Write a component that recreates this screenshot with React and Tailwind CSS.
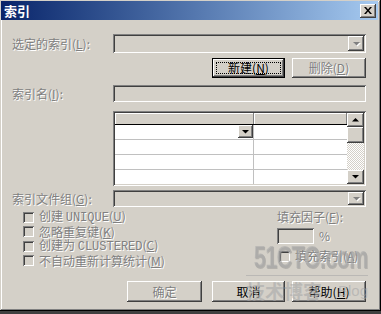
import React from "react";

const FONT = "font-['SimSun','Noto_Sans_CJK_SC',sans-serif]";
const RAISED =
  "shadow-[inset_-1px_-1px_#404040,inset_1px_1px_#ffffff,inset_-2px_-2px_#808080,inset_2px_2px_#d4d0c8]";
const SUNKEN =
  "shadow-[inset_1px_1px_#808080,inset_-1px_-1px_#ffffff,inset_2px_2px_#404040,inset_-2px_-2px_#d4d0c8]";
const DIS = "text-[#808080] [text-shadow:1px_1px_0_#ffffff]";

const Arrow = ({ down = true, disabled = false }) => (
  <svg width="7" height="4" viewBox="0 0 7 4" className="overflow-visible">
    {disabled && (
      <path d={down ? "M1 1h7L4.5 4.5z" : "M1 4.5h7L4.5 1z"} fill="#ffffff" />
    )}
    <path d={down ? "M0 0h7L3.5 3.5z" : "M0 3.5h7L3.5 0z"} fill={disabled ? "#808080" : "#000000"} />
  </svg>
);

const DropBtn = ({ disabled = true, className = "" }) => (
  <div className={`flex items-center justify-center bg-[#d4d0c8] ${RAISED} ${className}`}>
    <Arrow disabled={disabled} />
  </div>
);

const Combo = ({ h = "h-[19px]" }) => (
  <div className={`w-[253px] ${h} ${SUNKEN} bg-[#d4d0c8] flex justify-end p-[2px]`}>
    <DropBtn className="w-[16px] h-full" />
  </div>
);

const Label = ({ text, m }) => (
  <span className={`${DIS} whitespace-nowrap`}>
    {text}(<u>{m}</u>):
  </span>
);

const Button = ({ children, disabled, isDefault, w }) => (
  <div
    className={`${w} h-full flex bg-[#d4d0c8] ${isDefault ? "border border-black" : ""}`}
  >
    <div className={`w-full h-full flex items-center justify-center ${RAISED} ${isDefault ? "p-[3px]" : ""}`}>
      {isDefault ? (
        <div className="w-full h-full flex items-center justify-center border border-dotted border-black">
          {children}
        </div>
      ) : (
        <span className={disabled ? DIS : "text-black"}>{children}</span>
      )}
    </div>
  </div>
);

const Check = ({ children }) => (
  <div className="flex items-center gap-[5px] h-[14.5px]">
    <div className={`w-[11px] h-[11px] ${SUNKEN} bg-[#d4d0c8]`} />
    <span className={`${DIS} whitespace-nowrap leading-[14px]`}>{children}</span>
  </div>
);

const Mono = ({ children }) => (
  <span className="font-['Liberation_Mono',monospace] text-[12px]">{children}</span>
);

const Grid = () => (
  <div className={`w-[253px] h-[75px] ${SUNKEN} p-[2px] flex bg-[#d4d0c8]`}>
    <div className="flex-1 flex flex-col">
      <div className="h-[12px] flex border-b border-black bg-[#d4d0c8]">
        <div className="w-[139px] border-r border-[#808080] shadow-[inset_1px_1px_#ffffff]" />
        <div className="flex-1 shadow-[inset_1px_1px_#ffffff] border-r border-[#808080]" />
      </div>
      <div className="flex-1 bg-white flex flex-col">
        {[0, 1, 2, 3].map((i) => (
          <div key={i} className={`flex-1 flex ${i < 3 ? "border-b border-[#c0c0c0]" : ""}`}>
            <div className="w-[139px] border-r border-[#c0c0c0] flex justify-end">
              {i === 0 && (
                <div className={`w-[15px] h-[13px] flex items-center justify-center bg-[#d4d0c8] ${RAISED}`}>
                  <Arrow />
                </div>
              )}
            </div>
            <div className="flex-1" />
          </div>
        ))}
      </div>
    </div>
    <div className="w-[17px] flex flex-col">
      <div className={`h-[14px] flex items-center justify-center bg-[#d4d0c8] ${RAISED}`}>
        <Arrow down={false} />
      </div>
      <div className={`h-[16px] bg-[#d4d0c8] ${RAISED}`} />
      <div className="flex-1 bg-[repeating-conic-gradient(#ffffff_0_25%,#d4d0c8_0_50%)] [background-size:2px_2px]" />
      <div className={`h-[14px] flex items-center justify-center bg-[#d4d0c8] ${RAISED}`}>
        <Arrow />
      </div>
    </div>
  </div>
);

export default function App() {
  return (
    <div className={`w-[381px] h-[314px] bg-[#404040] ${FONT} text-[12px] leading-[14px]`}>
      <div
        className={`relative w-[381px] h-[311px] bg-[#d4d0c8] p-[1px] shadow-[inset_-1px_-1px_#000000,inset_1px_1px_#d4d0c8,inset_-2px_-2px_#808080,inset_2px_2px_#ffffff]`}
      >
        {/* title bar */}
        <div className="h-[19px] w-[377px] flex items-center justify-between pl-[3px] pr-[2px] bg-gradient-to-r from-[#0a246a] to-[#a6caf0]">
          <span className="text-white font-bold text-[13px]">索引</span>
          <div className={`w-[16px] h-[14px] flex items-center justify-center bg-[#d4d0c8] ${RAISED}`}>
            <svg width="8" height="7" viewBox="0 0 8 7">
              <path d="M0 0h2l2 2.5L6 0h2L5 3.5 8 7H6L4 4.5 2 7H0l3-3.5z" fill="#000" />
            </svg>
          </div>
        </div>

        <div className="pl-[11px] pr-[14px]">
          <div className="mt-[14px] h-[19px] flex items-center justify-between">
            <Label text="选定的索引" m="L" />
            <Combo />
          </div>

          <div className="mt-[5px] h-[20px] flex justify-end gap-[7px]">
            <Button isDefault w="w-[73px]">
              新建(<u>N</u>)
            </Button>
            <Button disabled w="w-[74px]">
              删除(<u>D</u>)
            </Button>
          </div>

          <div className="mt-[7px] h-[17px] flex items-center justify-between">
            <Label text="索引名" m="I" />
            <div className={`w-[253px] h-full ${SUNKEN}`} />
          </div>

          <div className="mt-[9px] flex justify-end">
            <Grid />
          </div>

          <div className="mt-[4px] h-[17px] flex items-center justify-between">
            <Label text="索引文件组" m="G" />
            <Combo h="h-[17px]" />
          </div>

          <div className="mt-[3px] h-[71px] flex">
            <div className="pl-[11px] flex flex-col w-[265px]">
              <Check>
                创建 <Mono>UNIQUE</Mono>(<u>U</u>)
              </Check>
              <Check>
                忽略重复键(<u>K</u>)
              </Check>
              <Check>
                创建为 <Mono>CLUSTERED</Mono>(<u>C</u>)
              </Check>
              <Check>
                不自动重新计算统计(<u>M</u>)
              </Check>
            </div>
            <div className="flex flex-col">
              <Label text="填充因子" m="F" />
              <div className="mt-[4px] flex items-center gap-[5px]">
                <div className={`w-[37px] h-[16px] ${SUNKEN}`} />
                <span className={DIS}>%</span>
              </div>
              <div className="mt-[5px] pl-[2px]">
                <Check>
                  填充索引(<u>A</u>)
                </Check>
              </div>
            </div>
          </div>

          <div className="h-[21px] flex justify-end gap-[10px]">
            <Button disabled w="w-[75px]">
              确定
            </Button>
            <div className="flex gap-[7px] h-full">
              <Button w="w-[73px]">取消</Button>
              <Button w="w-[74px]">
                帮助(<u>H</u>)
              </Button>
            </div>
          </div>
        </div>

        {/* watermark */}
        <div className="absolute left-[240px] top-[242px] w-[128px] pointer-events-none flex flex-col items-end text-[#a8a8a8]/60">
          <div className="w-[124px] h-[32px] flex justify-end overflow-visible">
            <span className="inline-block origin-right scale-x-[0.7] font-['Liberation_Sans',sans-serif] font-bold text-[31px] leading-[32px] tracking-[-1px] whitespace-nowrap [text-shadow:1px_1px_0_rgba(120,120,120,0.35)]">
              51CTO.com
            </span>
          </div>
          <div className="w-[122px] border-t border-[#a8a8a8]/60 mt-[1px]" />
          <div className="w-[122px] flex justify-between items-center mt-[5px]">
            <span className="text-[19px] leading-[20px] font-bold">技术博客</span>
            <span className="font-['Liberation_Sans',sans-serif] text-[15px]">Blog</span>
          </div>
        </div>
      </div>
    </div>
  );
}
